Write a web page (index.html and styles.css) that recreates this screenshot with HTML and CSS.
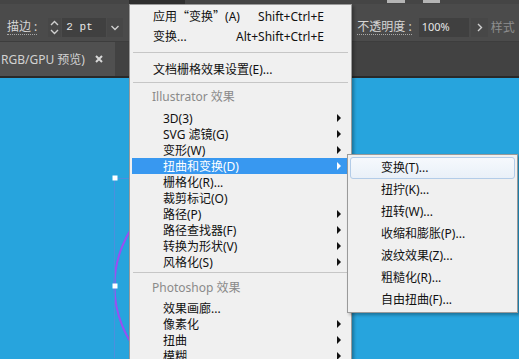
FILE: index.html
```html
<!DOCTYPE html>
<html lang="zh-CN">
<head>
  <meta charset="UTF-8" />
  <title>效果菜单 | Illustrator</title>
  <link rel="stylesheet" href="styles.css">
</head>
<body>

  <div class="app">
    <div class="menubar">
      <span class="menubar-open"></span>
      <span class="menubar-btn b1"></span>
      <span class="menubar-btn b2"></span>
    </div>

    <div class="controlbar">
      <div class="group">
        <span class="label">描边 :</span>
        <span class="spin">
          <svg width="13" height="19" viewBox="0 0 13 19"><polyline points="3,7 6.5,3.5 10,7" /><polyline points="3,12 6.5,15.5 10,12" /></svg>
        </span>
        <span class="field mono">2 pt</span>
        <span class="dropbtn">
          <svg width="16" height="19" viewBox="0 0 16 19"><polyline points="4.5,8 8,11.5 11.5,8" /></svg>
        </span>
      </div>
      <div class="group right">
        <span class="label">不透明度 :</span>
        <span class="field wide">100%</span>
        <span class="dropbtn">
          <svg width="17" height="19" viewBox="0 0 17 19"><polyline points="7,6 10.5,9.5 7,13" /></svg>
        </span>
        <span class="label dim">样式</span>
      </div>
    </div>

    <div class="tabbar">
      <div class="tab">
        RGB/GPU 预览)
        <svg class="close" width="8" height="8" viewBox="0 0 8 8"><path d="M1 1 L7 7 M7 1 L1 7" /></svg>
      </div>
    </div>

    <div class="canvas">
      <!-- 画板上的选中对象：边界框和圆形 -->
      <svg width="519" height="280" viewBox="0 0 519 280">
        <circle class="shape" cx="221" cy="208" r="106.5" />
        <line class="bbox" x1="114.5" y1="100" x2="114.5" y2="280" />
        <line class="bbox" x1="115" y1="100.5" x2="135" y2="100.5" />
        <rect class="handle" x="112.5" y="97.5" width="5" height="5" />
        <rect class="handle" x="112.5" y="205.5" width="5" height="5" />
      </svg>
    </div>
  </div>

  <div class="menu">
    <div class="row top"><span>应用<span class="cjk">“</span>变换<span class="cjk">”</span>(A)</span><span class="keys">Shift+Ctrl+E</span></div>
    <div class="row top"><span>变换...</span><span class="keys">Alt+Shift+Ctrl+E</span></div>
    <div class="sep s1"></div>
    <div class="row top doc"><span>文档栅格效果设置(E)...</span></div>
    <div class="sep s2"></div>
    <div class="head h1">Illustrator 效果</div>
    <div class="row"><span>3D(3)</span><i class="arrow"></i></div>
    <div class="row"><span>SVG 滤镜(G)</span><i class="arrow"></i></div>
    <div class="row"><span>变形(W)</span><i class="arrow"></i></div>
    <div class="row hl"><span>扭曲和变换(D)</span><i class="arrow"></i></div>
    <div class="row"><span>栅格化(R)...</span></div>
    <div class="row"><span>裁剪标记(O)</span></div>
    <div class="row"><span>路径(P)</span><i class="arrow"></i></div>
    <div class="row"><span>路径查找器(F)</span><i class="arrow"></i></div>
    <div class="row"><span>转换为形状(V)</span><i class="arrow"></i></div>
    <div class="row"><span>风格化(S)</span><i class="arrow"></i></div>
    <div class="sep s3"></div>
    <div class="head h2">Photoshop 效果</div>
    <div class="row"><span>效果画廊...</span></div>
    <div class="row"><span>像素化</span><i class="arrow"></i></div>
    <div class="row"><span>扭曲</span><i class="arrow"></i></div>
    <div class="row"><span>模糊</span><i class="arrow"></i></div>
  </div>

  <div class="submenu">
    <div class="sub-item hl">变换(T)...</div>
    <div class="sub-item">扭拧(K)...</div>
    <div class="sub-item">扭转(W)...</div>
    <div class="sub-item">收缩和膨胀(P)...</div>
    <div class="sub-item">波纹效果(Z)...</div>
    <div class="sub-item">粗糙化(R)...</div>
    <div class="sub-item">自由扭曲(F)...</div>
  </div>

</body>
</html>
```

FILE: styles.css
```css
body {
  margin: 0;
  width: 519px;
  height: 359px;
  overflow: hidden;
  position: relative;
  font-family: "Noto Sans", "Noto Sans CJK SC", sans-serif;
  font-size: 12px;
}
.app {
  display: flex;
  flex-direction: column;
  height: 359px;
}

/* 顶部菜单栏（只露出底部） */
.menubar {
  height: 4px;
  background: #454545;
  position: relative;
}
.menubar-open {
  position: absolute;
  left: 129px;
  width: 56px;
  height: 4px;
  background: #2e2e2e;
}
.menubar-btn {
  position: absolute;
  top: 0;
  height: 3px;
  background: #b4b4b4;
}
.b1 { left: 387px; width: 18px; }
.b2 { left: 423px; width: 17px; }

/* 控制栏 */
.controlbar {
  height: 38px;
  background: #4b4b4b;
  border-bottom: 1px solid #3d3d3d;
  display: flex;
  align-items: flex-start;
  padding: 14px 0 0 7px;
  box-sizing: border-box;
  white-space: nowrap;
}
.group {
  display: flex;
  align-items: center;
  height: 19px;
}
.group.right {
  margin-left: 234px;
}
.label {
  color: #d6d6d6;
  line-height: 14px;
  border-bottom: 1px dotted #a8a8a8;
  margin-right: 11px;
}
.group.right .label {
  margin-right: 6px;
}
.label.dim {
  color: #8e8e8e;
  border-bottom: none;
  margin-left: 3px;
}
.spin, .dropbtn {
  display: flex;
  height: 19px;
  background: #474747;
}
.spin svg polyline, .dropbtn svg polyline {
  fill: none;
  stroke: #cfcfcf;
  stroke-width: 1.4;
}
.field {
  height: 19px;
  line-height: 18px;
  box-sizing: border-box;
  background: #404040;
  color: #e6e6e6;
  margin: 0 1px;
}
.field.mono {
  width: 44px;
  padding-left: 4px;
  font-family: "Liberation Mono", monospace;
  font-size: 11px;
}
.field.wide {
  width: 50px;
  padding-left: 3px;
  font-size: 11px;
  margin-right: 2px;
}

/* 文档标签栏 */
.tabbar {
  height: 34px;
  background: #424242;
  border-bottom: 2px solid #292929;
  display: flex;
}
.tab {
  width: 115px;
  background: #505050;
  color: #d2d2d2;
  display: flex;
  align-items: center;
  padding-left: 1px;
  box-sizing: border-box;
  white-space: nowrap;
}
.close {
  margin-left: 10px;
}
.close path {
  stroke: #d8d8d8;
  stroke-width: 2;
}

/* 画板 */
.canvas {
  flex: 1;
  background: #27a4dd;
}
.canvas svg {
  display: block;
}
.shape {
  fill: none;
  stroke: #9b4df2;
  stroke-width: 2;
}
.bbox {
  stroke: #4c8fde;
  stroke-width: 1;
}
.handle {
  fill: #ffffff;
}

/* 效果菜单 */
.menu {
  position: absolute;
  left: 129px;
  top: 4px;
  width: 221px;
  height: 370px;
  padding-top: 1px;
  background: #f0f0f0;
  border: 1px solid #9a9a9a;
  box-shadow: 2px 2px 3px rgba(0, 0, 0, 0.3);
  color: #111;
}
.cjk {
  font-family: "Noto Sans CJK SC", sans-serif;
}
.row {
  display: flex;
  align-items: center;
  height: 16px;
  padding: 0 10px 0 33px;
  white-space: nowrap;
}
.row.top {
  height: 20px;
  padding: 0 27px 0 23px;
}
.row.doc {
  height: 22px;
}
.row.hl {
  background: #3898f0;
  color: #ffffff;
  margin-left: 2px;
  padding-left: 31px;
}
.keys {
  margin-left: auto;
}
.arrow {
  margin-left: auto;
  width: 0;
  height: 0;
  border-top: 4px solid transparent;
  border-bottom: 4px solid transparent;
  border-left: 4px solid #111;
}
.row.hl .arrow {
  border-left-color: #ffffff;
}
.sep {
  margin: 6px 3px 5px;
  border-top: 1px solid #c6c6c6;
}
.sep.s2 { margin: 2px 3px 1px; }
.sep.s3 { margin: 2px 3px 3px; }
.head {
  color: #8a8a8a;
  padding-left: 22px;
  height: 26px;
  line-height: 26px;
}
.head.h2 {
  height: 24px;
  line-height: 24px;
}

/* 扭曲和变换 子菜单 */
.submenu {
  position: absolute;
  left: 347px;
  top: 154px;
  width: 167px;
  padding: 2px 1px 1px;
  background: #f0f0f0;
  border: 1px solid #9a9a9a;
  box-shadow: 2px 2px 3px rgba(0, 0, 0, 0.3);
  color: #111;
}
.sub-item {
  height: 22px;
  line-height: 20px;
  box-sizing: border-box;
  margin: 0 1px;
  padding-left: 30px;
  border: 1px solid transparent;
  border-radius: 3px;
  white-space: nowrap;
}
.sub-item.hl {
  border-color: #b3cce8;
  background: linear-gradient(#f6f9fd, #e9f0f8);
}
```
